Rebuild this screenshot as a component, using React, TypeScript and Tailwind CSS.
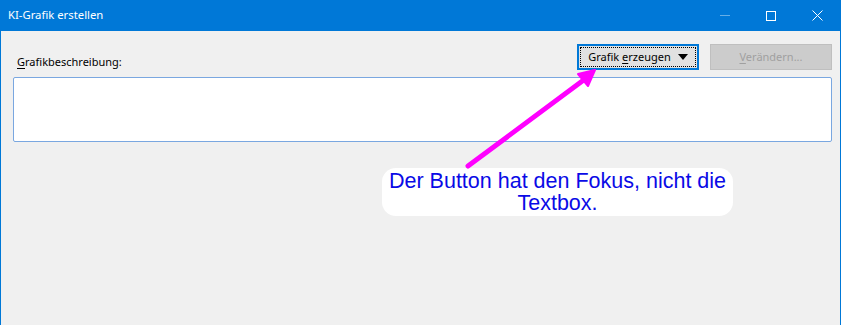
import React from "react";

export default function App() {
  const ui = { fontFamily: '"Noto Sans", "Open Sans", sans-serif' };
  return (
    <div className="relative w-[841px] h-[325px] overflow-hidden bg-[#f0f0f0] border-x border-[#0078d7]" style={ui}>
      <div className="h-[31px] bg-[#0078d7] flex items-center pl-[7px] text-white text-[11.3px]">
        <span className="flex-1">KI-Grafik erstellen</span>
        <div className="flex items-center h-full">
          <div className="w-[46px] h-full flex items-center justify-center">
            <div className="w-[10px] h-px bg-white/40" />
          </div>
          <div className="w-[46px] h-full flex items-center justify-center">
            <div className="w-[10px] h-[10px] border border-white" />
          </div>
          <div className="w-[46px] h-full flex items-center justify-center">
            <svg width="11" height="11" viewBox="0 0 11 11">
              <path d="M0.5 0.5 L10.5 10.5 M10.5 0.5 L0.5 10.5" stroke="white" strokeWidth="1" />
            </svg>
          </div>
        </div>
      </div>
      <div className="pl-[12px] pr-[8px] pt-[13px]">
        <div className="flex items-end">
          <label className="flex-1 pl-[4px] text-[11px] text-black leading-[14px] mb-[1px]">
            <span className="underline underline-offset-2">G</span>rafikbeschreibung:
          </label>
          <div className="flex gap-[11px]">
            <div className="w-[122px] h-[26px] border-2 border-[#0078d7] bg-[#e1e1e1] p-[1px]">
              <div className="w-full h-full border border-dotted border-black flex items-center justify-center gap-[7px] text-[11px] text-black">
                <span>
                  Grafik <span className="underline underline-offset-2">e</span>rzeugen
                </span>
                <svg width="10" height="6" viewBox="0 0 10 6">
                  <path d="M0 0 L10 0 L5 6 Z" fill="black" />
                </svg>
              </div>
            </div>
            <div className="w-[122px] h-[26px] border border-[#bfbfbf] bg-[#cccccc] flex items-center justify-center text-[11px] text-[#a0a0a0]">
              <span>
                <span className="underline underline-offset-2">V</span>erändern...
              </span>
            </div>
          </div>
        </div>
        <div className="mt-[7px] h-[65px] bg-white border border-[#7aa7e0] rounded-[2px]" />
      </div>

      <div
        className="absolute left-[381px] top-[168px] w-[351px] h-[48px] bg-white rounded-[14px] flex flex-col items-center justify-center text-[21.5px] leading-[22px] text-[#0a0ae6]"
        style={{ fontFamily: '"Liberation Sans", Arial, sans-serif' }}
      >
        <span>Der Button hat den Fokus, nicht die</span>
        <span>Textbox.</span>
      </div>

      <svg className="absolute left-0 top-0" width="841" height="325" viewBox="0 0 841 325">
        <line x1="467" y1="166" x2="584" y2="79" stroke="#ff00ff" strokeWidth="5" strokeLinecap="round" />
        <path d="M594 70 L577 74 L587 86 Z" fill="#ff00ff" stroke="#ff00ff" strokeWidth="2" strokeLinejoin="round" />
      </svg>
    </div>
  );
}
